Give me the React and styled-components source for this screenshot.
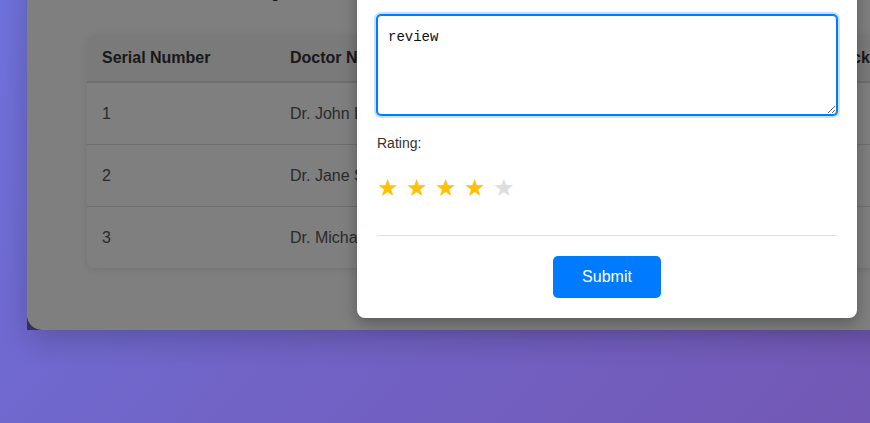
import React, { useState } from 'react';
import styled, { createGlobalStyle } from 'styled-components';

const GlobalStyle = createGlobalStyle`
  html, body {
    margin: 0;
    padding: 0;
    font-family: "Liberation Sans", Arial, sans-serif;
  }
`;

const Page = styled.div`
  height: 100vh;
  overflow: hidden;
  box-sizing: border-box;
  display: flex;
  flex-direction: column;
  justify-content: flex-end;
  align-items: flex-start;
  padding: 0 0 93px 27px;
  background: linear-gradient(135deg, #6f72dc 0%, #7163c6 50%, #7358b5 100%);
`;

const Card = styled.div`
  position: relative;
  flex-shrink: 0;
  width: 1160px;
  box-sizing: border-box;
  padding: 40px 60px 62px;
  background: #ffffff;
  border-radius: 15px;
  box-shadow: 0 10px 30px rgba(0, 0, 0, 0.2);
`;

const Title = styled.h2`
  margin: 0 0 33px;
  font-size: 30px;
  font-weight: bold;
  color: #333;
`;

const Table = styled.table`
  width: 100%;
  table-layout: fixed;
  border-collapse: separate;
  border-spacing: 0;
  border-radius: 8px;
  overflow: hidden;
  box-shadow: 0 2px 10px rgba(0, 0, 0, 0.1);
`;

const Th = styled.th`
  text-align: left;
  padding: 14px 15px;
  line-height: 18px;
  font-size: 16px;
  font-weight: bold;
  color: #333;
  background: #f5f5f5;
  border-bottom: 2px solid #ddd;
`;

const Td = styled.td`
  padding: 20px 15px;
  line-height: 21px;
  font-size: 16px;
  color: #555;
  border-bottom: ${(p) => (p.$last ? 'none' : '1px solid #ddd')};
`;

const RateLink = styled.span`
  color: #007bff;
  cursor: pointer;
`;

const Overlay = styled.div`
  position: absolute;
  inset: 0;
  box-sizing: border-box;
  display: flex;
  justify-content: center;
  align-items: flex-end;
  padding-bottom: 12px;
  background: rgba(0, 0, 0, 0.5);
`;

const Modal = styled.div`
  width: 500px;
  box-sizing: border-box;
  padding: 20px;
  background: #fff;
  border-radius: 8px;
  box-shadow: 0 5px 15px rgba(0, 0, 0, 0.3);
`;

const ModalTitle = styled.h3`
  margin: 0 0 15px;
  font-size: 20px;
  color: #333;
`;

const ReviewInput = styled.textarea`
  display: block;
  width: 100%;
  height: 100px;
  box-sizing: border-box;
  margin: 0 0 20px;
  padding: 13px 10px 10px;
  font: 14px "Liberation Mono", "DejaVu Sans Mono", monospace;
  color: #111;
  border: 1px solid #007bff;
  border-radius: 4px;
  box-shadow: 0 0 0 1px #007bff, 0 0 0 3px rgba(0, 123, 255, 0.22);
  outline: none;
  resize: vertical;
`;

const Label = styled.label`
  display: block;
  margin-bottom: 23px;
  font-size: 14px;
  line-height: 16px;
  color: #333;
`;

const Stars = styled.div`
  display: flex;
  margin-bottom: 33px;
  line-height: 28px;
`;

const Star = styled.span`
  margin-right: 7.5px;
  font: 24px "DejaVu Sans", sans-serif;
  color: ${(p) => (p.$filled ? '#ffc107' : '#ddd')};
  cursor: pointer;
`;

const Footer = styled.div`
  display: flex;
  justify-content: center;
  padding-top: 20px;
  border-top: 1px solid #e0e0e0;
`;

const SubmitButton = styled.button`
  padding: 12px 29.5px;
  font: 16px "Liberation Sans", Arial, sans-serif;
  line-height: 18px;
  color: #fff;
  background: #007bff;
  border: none;
  border-radius: 5px;
  cursor: pointer;
`;

const doctors = [
  { id: 1, name: 'Dr. John Doe' },
  { id: 2, name: 'Dr. Jane Smith' },
  { id: 3, name: 'Dr. Michael Brown' },
];

const App = () => {
  const [rating, setRating] = useState(4);

  return (
    <Page>
      <GlobalStyle />
      <Card>
        <Title>Rate Your Experience</Title>
        <Table>
          <colgroup>
            <col style={{ width: '188px' }} />
            <col style={{ width: '506px' }} />
            <col />
          </colgroup>
          <thead>
            <tr>
              <Th>Serial Number</Th>
              <Th>Doctor Name</Th>
              <Th>Feedback</Th>
            </tr>
          </thead>
          <tbody>
            {doctors.map((doc, i) => (
              <tr key={doc.id}>
                <Td $last={i === doctors.length - 1}>{doc.id}</Td>
                <Td $last={i === doctors.length - 1}>{doc.name}</Td>
                <Td $last={i === doctors.length - 1}>
                  <RateLink>Rate</RateLink>
                </Td>
              </tr>
            ))}
          </tbody>
        </Table>

        <Overlay>
          <Modal>
            <ModalTitle>Leave a Review</ModalTitle>
            <ReviewInput defaultValue="review" />
            <Label>Rating:</Label>
            <Stars>
              {[1, 2, 3, 4, 5].map((n) => (
                <Star key={n} $filled={n <= rating} onClick={() => setRating(n)}>
                  ★
                </Star>
              ))}
            </Stars>
            <Footer>
              <SubmitButton>Submit</SubmitButton>
            </Footer>
          </Modal>
        </Overlay>
      </Card>
    </Page>
  );
};

export default App;
